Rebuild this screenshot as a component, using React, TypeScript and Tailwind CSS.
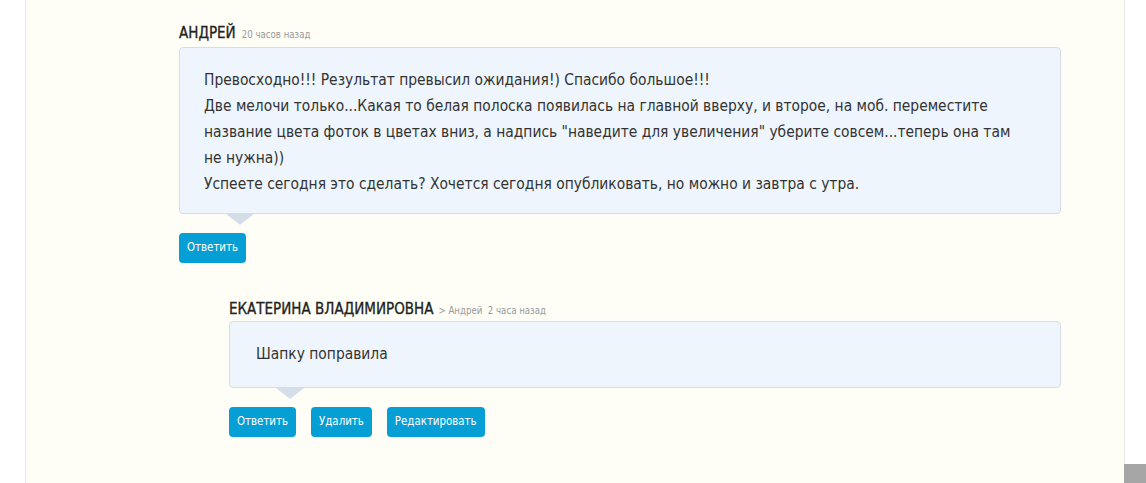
const font = { fontFamily: '"DejaVu Sans Condensed", "DejaVu Sans", sans-serif' };

function Bubble({ children, pad }: { children: React.ReactNode; pad: string }) {
  return (
    <div className="relative">
      <div className={`rounded-[4px] border border-[#d5dee8] bg-[#eef5fc] ${pad} text-[15.4px] leading-[26px] text-[#333]`}>
        {children}
      </div>
      <div className="absolute left-[47px] top-full h-0 w-0 border-x-[14px] border-t-[11px] border-x-transparent border-t-[#d5dee8]" />
    </div>
  );
}

function Btn({ label }: { label: string }) {
  return (
    <button className="h-[30px] rounded-[4px] bg-[#069fd5] px-[8px] text-[11.4px] text-white">
      {label}
    </button>
  );
}

export default function App() {
  return (
    <div className="relative flex h-[483px] w-full overflow-hidden bg-white" style={font}>
      <div className="w-[25px] shrink-0" />
      <div className="h-full w-[1100px] shrink-0 border-x border-[#e9e9e3] bg-[#fefef6] pl-[153px]">
        <div className="w-[882px]">
          <div className="flex items-baseline gap-[6px] pt-[22px]">
            <span className="text-[15px] uppercase text-[#222] [-webkit-text-stroke:0.3px_#222]">Андрей</span>
            <span className="text-[9.6px] text-[#999]">20 часов назад</span>
          </div>
          <div className="mt-[2px]">
            <Bubble pad="pl-[24px] pr-[40px] pt-[19px] pb-[16px]">
              <p>Превосходно!!! Результат превысил ожидания!) Спасибо большое!!!</p>
              <p>
                Две мелочи только...Какая то белая полоска появилась на главной вверху, и второе, на моб. переместите
                название цвета фоток в цветах вниз, а надпись "наведите для увеличения" уберите совсем...теперь она там
                не нужна))
              </p>
              <p>Успеете сегодня это сделать? Хочется сегодня опубликовать, но можно и завтра с утра.</p>
            </Bubble>
          </div>
          <div className="mt-[19px] flex">
            <Btn label="Ответить" />
          </div>

          <div className="ml-[50px] mt-[35px]">
            <div className="flex items-baseline gap-[5px]">
              <span className="text-[15px] uppercase text-[#222] [-webkit-text-stroke:0.3px_#222]">Екатерина Владимировна</span>
              <span className="text-[9.6px] text-[#999]">&gt; Андрей&nbsp; 2 часа назад</span>
            </div>
            <div className="mt-[1px]">
              <Bubble pad="px-[26px] pt-[19px] pb-[20px]">
                <p>Шапку поправила</p>
              </Bubble>
            </div>
            <div className="mt-[19px] flex gap-[15px]">
              <Btn label="Ответить" />
              <Btn label="Удалить" />
              <Btn label="Редактировать" />
            </div>
          </div>
        </div>
      </div>
      <div className="absolute bottom-0 right-0 h-[19px] w-[22px] bg-[#a6a6a6]" />
    </div>
  );
}
